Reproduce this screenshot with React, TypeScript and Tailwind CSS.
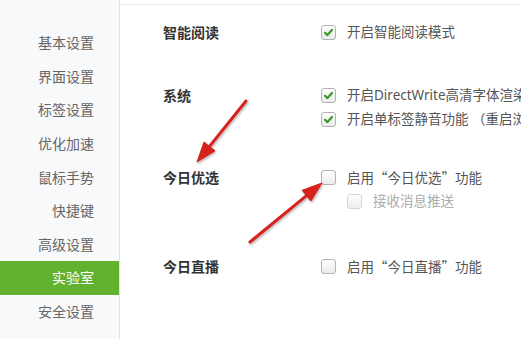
const navItems = ["基本设置", "界面设置", "标签设置", "优化加速", "鼠标手势", "快捷键", "高级设置", "实验室", "安全设置"];

function CheckBox({ checked, disabled }: { checked?: boolean; disabled?: boolean }) {
  return (
    <span
      className={`flex h-[15px] w-[15px] shrink-0 items-center justify-center rounded-[3px] border bg-gradient-to-b from-white to-[#ececec] ${
        disabled ? "border-[#d6d6d6]" : "border-[#b3b3b3]"
      }`}
    >
      {checked && (
        <svg width="11" height="11" viewBox="0 0 11 11">
          <path d="M2 5.8 L4.4 8.1 L9 2.9" fill="none" stroke="#3a9a2b" strokeWidth="2.2" strokeLinecap="round" strokeLinejoin="round" />
        </svg>
      )}
    </span>
  );
}

function Option({
  text,
  checked,
  disabled,
  indent,
  cjk,
}: {
  text: string;
  checked?: boolean;
  disabled?: boolean;
  indent?: boolean;
  cjk?: boolean;
}) {
  return (
    <div className={`flex h-[24px] items-center gap-[11px] whitespace-nowrap ${indent ? "pl-[26px]" : ""}`}>
      <CheckBox checked={checked} disabled={disabled} />
      <span
        lang={cjk ? "zh-CN" : undefined}
        className={disabled ? "text-[#acacac]" : "text-[#555]"}
        style={cjk ? { fontFamily: '"Noto Sans CJK SC", sans-serif' } : undefined}
      >
        {text}
      </span>
    </div>
  );
}

function Section({ label, className, children }: { label: string; className: string; children: React.ReactNode }) {
  return (
    <div className={`flex ${className}`}>
      <div className="flex h-[24px] w-[158px] shrink-0 items-center text-[14px] font-bold text-[#333]">{label}</div>
      <div className="flex flex-col">{children}</div>
    </div>
  );
}

export default function App() {
  return (
    <div
      className="relative flex h-[339px] w-[521px] overflow-hidden bg-white"
      style={{ fontFamily: '"Noto Sans", "Noto Sans CJK SC", sans-serif' }}
    >
      {/* sidebar */}
      <div className="flex h-full w-[120px] shrink-0 flex-col border-r border-[#e3e3e3] bg-[#f8f9fb] pt-[26px]">
        {navItems.map((item) => (
          <div
            key={item}
            className={`flex h-[33.6px] items-center justify-end pr-[25px] text-[14px] ${
              item === "实验室" ? "bg-[#62b22f] text-white" : "text-[#666]"
            }`}
          >
            {item}
          </div>
        ))}
      </div>

      {/* content */}
      <div className="flex-1 overflow-hidden pt-[4px]">
        <div className="h-full border-t border-[#ebebeb] pl-[43px] text-[13.5px]">
          <Section label="智能阅读" className="mt-[15px]">
            <Option text="开启智能阅读模式" checked />
          </Section>
          <Section label="系统" className="mt-[39px]">
            <Option text="开启DirectWrite高清字体渲染" checked />
            <Option text="开启单标签静音功能 （重启浏览器后生效）" checked />
          </Section>
          <Section label="今日优选" className="mt-[34px]">
            <Option text="启用“今日优选”功能" cjk />
            <Option text="接收消息推送" disabled indent />
          </Section>
          <Section label="今日直播" className="mt-[41px]">
            <Option text="启用“今日直播”功能" cjk />
          </Section>
        </div>
      </div>

      {/* red annotation arrows */}
      <svg className="pointer-events-none absolute left-0 top-0" width="521" height="339" viewBox="0 0 521 339">
        <defs>
          <filter id="sh" x="-20%" y="-20%" width="140%" height="140%">
            <feDropShadow dx="1" dy="1.5" stdDeviation="1.2" floodColor="#000" floodOpacity="0.3" />
          </filter>
        </defs>
        <g filter="url(#sh)" fill="#d6201f" stroke="#d6201f">
          <line x1="246" y1="101" x2="209.5" y2="146.4" strokeWidth="3" strokeLinecap="round" />
          <polygon points="197,162 215,150.8 204,142" strokeWidth="1" strokeLinejoin="round" />
          <line x1="250" y1="242" x2="306.5" y2="195.7" strokeWidth="3" strokeLinecap="round" />
          <polygon points="322,183 310.9,201.1 302.1,190.3" strokeWidth="1" strokeLinejoin="round" />
        </g>
      </svg>
    </div>
  );
}
